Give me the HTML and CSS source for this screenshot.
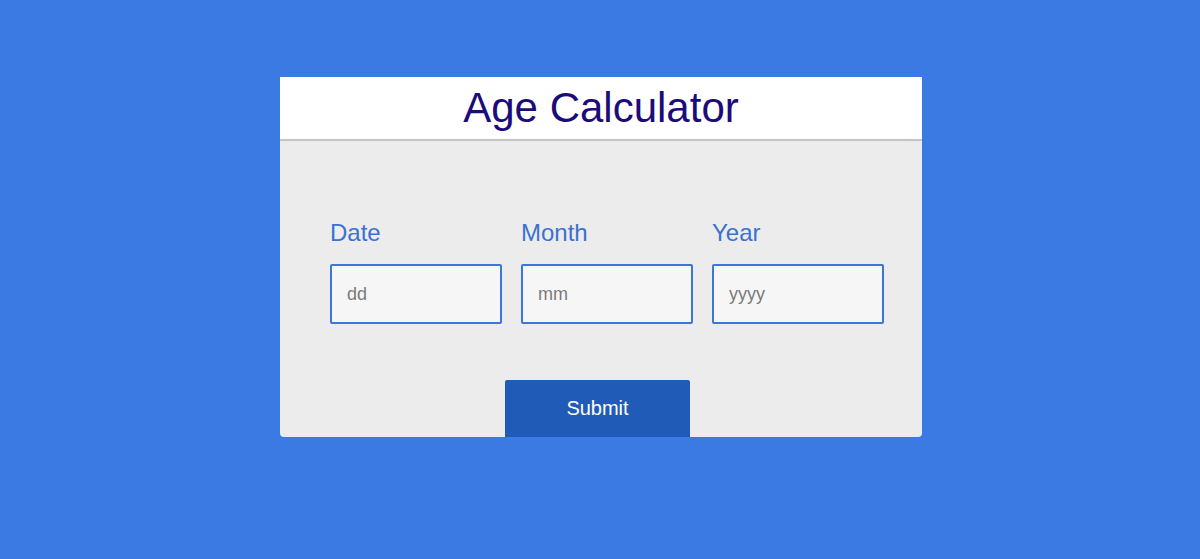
FILE: index.html
```html
<!DOCTYPE html>
<html lang="en">
<head>
<meta charset="utf-8">
<title>Age Calculator</title>
<link rel="stylesheet" href="styles.css">
</head>
<body>
<div class="card">
  <div class="card-header">
    <h1 class="title">Age Calculator</h1>
  </div>
  <div class="card-body">
    <div class="fields">
      <div class="field">
        <label class="label" for="d">Date</label>
        <input class="input" id="d" type="text" placeholder="dd">
      </div>
      <div class="field">
        <label class="label" for="m">Month</label>
        <input class="input" id="m" type="text" placeholder="mm">
      </div>
      <div class="field">
        <label class="label" for="y">Year</label>
        <input class="input" id="y" type="text" placeholder="yyyy">
      </div>
    </div>
    <div class="actions">
      <button class="submit" type="button">Submit</button>
    </div>
  </div>
</div>
</body>
</html>
```
FILE: styles.css
```css
* { box-sizing: border-box; }
html, body { height: 100%; }
body {
  margin: 0;
  background: #3a7ae2;
  font-family: "Liberation Sans", Arial, sans-serif;
  padding-top: 77px;
}
.card {
  width: 642px;
  margin: 0 auto 0 280px;
  background: #ececec;
  border-radius: 0 0 4px 4px;
  overflow: hidden;
}
.card-header {
  background: #ffffff;
  height: 64px;
  border-bottom: 2px solid #c4c4c4;
}
.title {
  margin: 0;
  text-align: center;
  font-weight: normal;
  font-size: 42px;
  line-height: 62px;
  color: #1c0b7a;
}
.card-body {
  padding: 78px 0 0 50px;
}
.fields {
  display: flex;
  gap: 19px;
}
.field {
  display: flex;
  flex-direction: column;
  width: 172px;
}
.label {
  font-size: 24px;
  line-height: 28px;
  color: #3b72d0;
  margin-bottom: 17px;
}
.input {
  width: 172px;
  height: 60px;
  border: 2px solid #3a77d6;
  border-radius: 2px;
  background: #f6f6f6;
  padding: 0 15px;
  font-family: "Liberation Sans", Arial, sans-serif;
  font-size: 18px;
  color: #333;
  outline: none;
}
.input::placeholder { color: #7a7a7a; }
.actions {
  display: flex;
  padding-left: 175px;
  margin-top: 56px;
}
.submit {
  width: 185px;
  height: 57px;
  border: none;
  border-radius: 2px 2px 0 0;
  background: #1f5bb7;
  color: #ffffff;
  font-family: "Liberation Sans", Arial, sans-serif;
  font-size: 20px;
  cursor: pointer;
}
```
